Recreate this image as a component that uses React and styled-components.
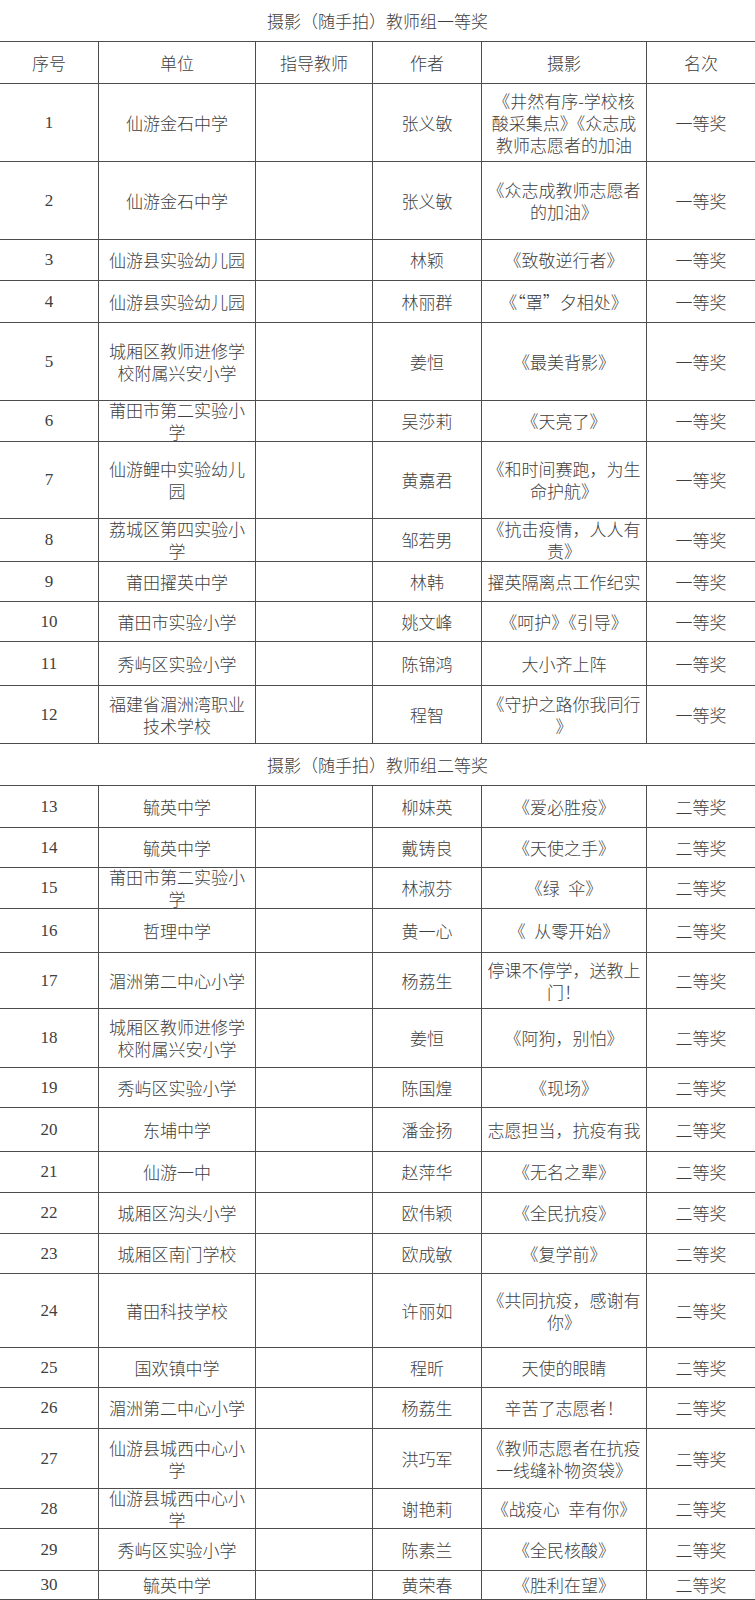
import React from "react";
import styled, { createGlobalStyle } from "styled-components";

const GlobalStyle = createGlobalStyle`
  body {
    margin: 0;
    background: #fff;
  }
`;

const COLUMNS = "98px 157px 117px 109px 165px 109px";
const LINE = "#4d4d4d";

const first = [
  [1, "仙游金石中学", "张义敏", "《井然有序-学校核\n酸采集点》《众志成\n教师志愿者的加油", 78],
  [2, "仙游金石中学", "张义敏", "《众志成教师志愿者\n的加油》", 78],
  [3, "仙游县实验幼儿园", "林颖", "《致敬逆行者》", 41],
  [4, "仙游县实验幼儿园", "林丽群", "《“罩”夕相处》", 42],
  [5, "城厢区教师进修学\n校附属兴安小学", "姜恒", "《最美背影》", 78],
  [6, "莆田市第二实验小\n学", "吴莎莉", "《天亮了》", 41],
  [7, "仙游鲤中实验幼儿\n园", "黄嘉君", "《和时间赛跑，为生\n命护航》", 77],
  [8, "荔城区第四实验小\n学", "邹若男", "《抗击疫情，人人有\n责》", 43],
  [9, "莆田擢英中学", "林韩", "擢英隔离点工作纪实", 40],
  [10, "莆田市实验小学", "姚文峰", "《呵护》《引导》", 40],
  [11, "秀屿区实验小学", "陈锦鸿", "大小齐上阵", 44],
  [12, "福建省湄洲湾职业\n技术学校", "程智", "《守护之路你我同行\n》", 58],
];

const second = [
  [13, "毓英中学", "柳妹英", "《爱必胜疫》", 42],
  [14, "毓英中学", "戴铸良", "《天使之手》", 40],
  [15, "莆田市第二实验小\n学", "林淑芬", "《绿\u2002伞》", 41],
  [16, "哲理中学", "黄一心", "《\u2002从零开始》", 44],
  [17, "湄洲第二中心小学", "杨荔生", "停课不停学，送教上\n门！", 56],
  [18, "城厢区教师进修学\n校附属兴安小学", "姜恒", "《阿狗，别怕》", 59],
  [19, "秀屿区实验小学", "陈国煌", "《现场》", 40],
  [20, "东埔中学", "潘金扬", "志愿担当，抗疫有我", 44],
  [21, "仙游一中", "赵萍华", "《无名之辈》", 41],
  [22, "城厢区沟头小学", "欧伟颖", "《全民抗疫》", 41],
  [23, "城厢区南门学校", "欧成敏", "《复学前》", 40],
  [24, "莆田科技学校", "许丽如", "《共同抗疫，感谢有\n你》", 74],
  [25, "国欢镇中学", "程昕", "天使的眼睛", 40],
  [26, "湄洲第二中心小学", "杨荔生", "辛苦了志愿者！", 41],
  [27, "仙游县城西中心小\n学", "洪巧军", "《教师志愿者在抗疫\n一线缝补物资袋》", 60],
  [28, "仙游县城西中心小\n学", "谢艳莉", "《战疫心\u2002幸有你》", 40],
  [29, "秀屿区实验小学", "陈素兰", "《全民核酸》", 42],
  [30, "毓英中学", "黄荣春", "《胜利在望》", 30],
];

const Sheet = styled.div`
  width: 755px;
  display: flex;
  flex-direction: column;
  font-family: "Noto Sans CJK SC", "Noto Sans", sans-serif;
  font-size: 17px;
  font-weight: 300;
  line-height: 22px;
  color: #404040;
`;

const TitleRow = styled.div`
  box-sizing: border-box;
  height: ${(p) => p.$h}px;
  display: flex;
  align-items: center;
  justify-content: center;
  border-top: ${(p) => (p.$top ? `1px solid ${LINE}` : "none")};
`;

const Row = styled.div`
  box-sizing: border-box;
  height: ${(p) => p.$h}px;
  display: grid;
  grid-template-columns: ${COLUMNS};
  border-top: 1px solid ${LINE};
  border-bottom: ${(p) => (p.$last ? `1px solid ${LINE}` : "none")};
`;

const Cell = styled.div`
  display: flex;
  align-items: center;
  justify-content: center;
  text-align: center;
  white-space: pre-line;
  padding: 0 4px;
  min-height: 0;
  border-left: 1px solid ${LINE};
`;

const SeqCell = styled(Cell)`
  border-left: none;
  font-family: "Liberation Serif", "Noto Sans CJK SC", serif;
  font-weight: 400;
`;

const HeadSeq = styled(Cell)`
  border-left: none;
`;

const Entry = ({ item, prize, last }) => {
  const [no, unit, author, work, h] = item;
  return (
    <Row $h={h} $last={last}>
      <SeqCell>{no}</SeqCell>
      <Cell>{unit}</Cell>
      <Cell />
      <Cell>{author}</Cell>
      <Cell>{work}</Cell>
      <Cell>{prize}</Cell>
    </Row>
  );
};

export default function App() {
  return (
    <>
      <GlobalStyle />
      <Sheet>
        <TitleRow $h={41}>摄影（随手拍）教师组一等奖</TitleRow>
        <Row $h={42}>
          <HeadSeq>序号</HeadSeq>
          <Cell>单位</Cell>
          <Cell>指导教师</Cell>
          <Cell>作者</Cell>
          <Cell>摄影</Cell>
          <Cell>名次</Cell>
        </Row>
        {first.map((item) => (
          <Entry key={item[0]} item={item} prize="一等奖" />
        ))}
        <TitleRow $h={42} $top>
          摄影（随手拍）教师组二等奖
        </TitleRow>
        {second.map((item, i) => (
          <Entry
            key={item[0]}
            item={item}
            prize="二等奖"
            last={i === second.length - 1}
          />
        ))}
      </Sheet>
    </>
  );
}
